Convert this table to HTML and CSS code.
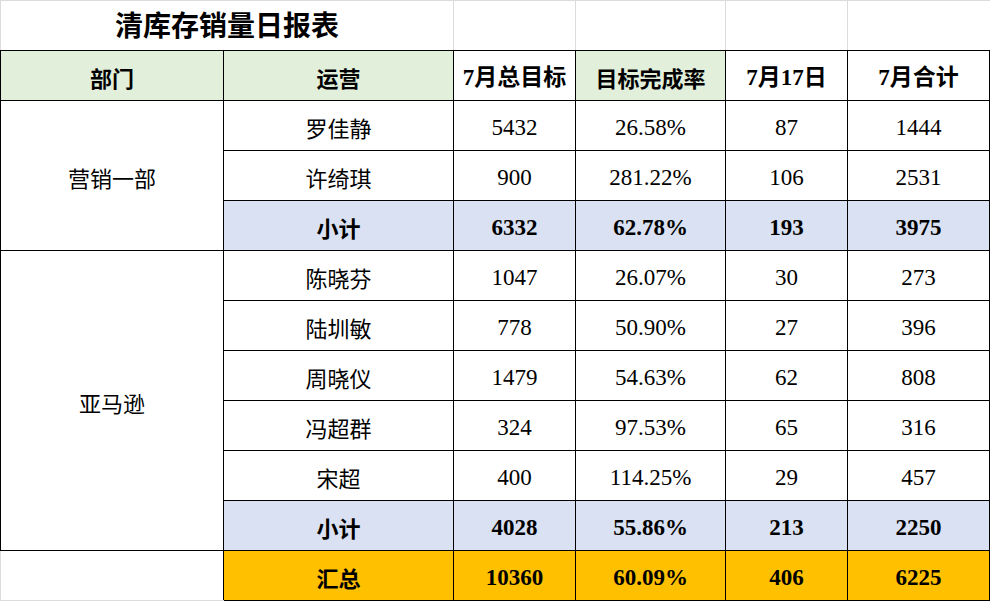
FILE: index.html
```html
<!DOCTYPE html>
<html lang="zh-CN">
<head>
<meta charset="utf-8">
<title>清库存销量日报表</title>
<link rel="stylesheet" href="styles.css">
</head>
<body>
<table class="report">
  <colgroup>
    <col class="c-dept">
    <col class="c-op">
    <col class="c-target">
    <col class="c-rate">
    <col class="c-day">
    <col class="c-month">
  </colgroup>
  <tbody>
    <tr class="title-row">
      <td colspan="2" class="title">清库存销量日报表</td>
      <td></td><td></td><td></td><td class="last"></td>
    </tr>
    <tr class="head-row">
      <th class="green">部门</th>
      <th class="green">运营</th>
      <th>7月总目标</th>
      <th class="green">目标完成率</th>
      <th>7月17日</th>
      <th>7月合计</th>
    </tr>
    <tr>
      <td rowspan="3" class="dept">营销一部</td>
      <td class="name">罗佳静</td><td>5432</td><td>26.58%</td><td>87</td><td>1444</td>
    </tr>
    <tr>
      <td class="name">许绮琪</td><td>900</td><td>281.22%</td><td>106</td><td>2531</td>
    </tr>
    <tr class="sub">
      <td class="name">小计</td><td>6332</td><td>62.78%</td><td>193</td><td>3975</td>
    </tr>
    <tr>
      <td rowspan="6" class="dept">亚马逊</td>
      <td class="name">陈晓芬</td><td>1047</td><td>26.07%</td><td>30</td><td>273</td>
    </tr>
    <tr>
      <td class="name">陆圳敏</td><td>778</td><td>50.90%</td><td>27</td><td>396</td>
    </tr>
    <tr>
      <td class="name">周晓仪</td><td>1479</td><td>54.63%</td><td>62</td><td>808</td>
    </tr>
    <tr>
      <td class="name">冯超群</td><td>324</td><td>97.53%</td><td>65</td><td>316</td>
    </tr>
    <tr>
      <td class="name">宋超</td><td>400</td><td>114.25%</td><td>29</td><td>457</td>
    </tr>
    <tr class="sub">
      <td class="name">小计</td><td>4028</td><td>55.86%</td><td>213</td><td>2250</td>
    </tr>
    <tr class="total">
      <td class="blank"></td>
      <td class="name">汇总</td><td>10360</td><td>60.09%</td><td>406</td><td>6225</td>
    </tr>
  </tbody>
</table>
</body>
</html>
```

FILE: styles.css
```css
html, body {
  margin: 0;
  padding: 0;
  background: #ffffff;
}

.report {
  border-collapse: collapse;
  table-layout: fixed;
  width: 989px;
  font-family: "Liberation Serif", "Noto Sans CJK SC", serif;
  color: #000;
}

.c-dept { width: 223px; }
.c-op { width: 230px; }
.c-target { width: 122px; }
.c-rate { width: 150px; }
.c-day { width: 122px; }
.c-month { width: 142px; }

.report td,
.report th {
  height: 50px;
  box-sizing: border-box;
  border: 1px solid #000;
  text-align: center;
  vertical-align: middle;
  padding: 5px 0 0 0;
  font-size: 23px;
  font-weight: normal;
  line-height: 26px;
  white-space: nowrap;
}

.report .name,
.report .dept {
  font-family: "Noto Sans CJK SC", "Liberation Serif", sans-serif;
  font-size: 22px;
  padding-top: 3px;
}

.title-row td {
  border: 1px solid #dcdcdc;
  border-bottom: 1px solid #000;
}

.title-row td.last {
  border-right: none;
}

.report td.title {
  font-family: "Noto Sans CJK SC", serif;
  font-weight: bold;
  font-size: 28px;
  line-height: 30px;
  padding: 0 0 4px 0;
}

.head-row th {
  font-weight: bold;
  font-size: 23px;
  padding-top: 4px;
}

.head-row th.green {
  background: #e2efda;
  font-family: "Noto Sans CJK SC", serif;
  font-size: 22px;
  padding-top: 2px;
}

.sub td {
  background: #d9e1f2;
  font-weight: bold;
}

.total td {
  background: #ffc000;
  font-weight: bold;
}

.report .total td.blank {
  background: #ffffff;
  border-left: 1px solid #dcdcdc;
  border-bottom: 1px solid #dcdcdc;
  border-right: 1px solid #000;
}
```
